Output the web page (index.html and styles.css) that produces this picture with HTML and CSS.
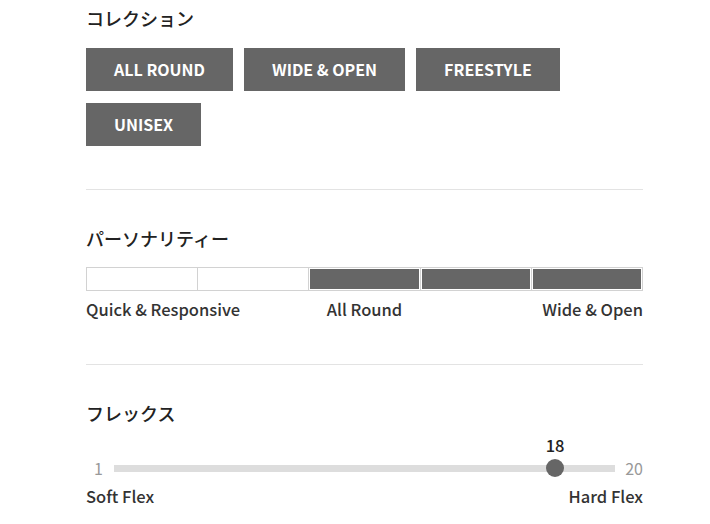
FILE: index.html
```html
<!DOCTYPE html>
<html lang="ja">
<head>
    <meta charset="UTF-8">
    <meta name="viewport" content="width=device-width, initial-scale=1.0">
    <title>Board Spec</title>
    <link rel="stylesheet" href="styles.css">
</head>
<body>
<div class="spec">

    <!-- Collection -->
    <div class="section section-first">
        <h2>コレクション</h2>
        <div class="tags">
            <a href="#" class="tag">ALL ROUND</a>
            <a href="#" class="tag">WIDE &amp; OPEN</a>
            <a href="#" class="tag">FREESTYLE</a>
            <a href="#" class="tag">UNISEX</a>
        </div>
    </div>

    <!-- Personality -->
    <div class="section">
        <h2>パーソナリティー</h2>
        <div class="meter">
            <span class="cell"></span>
            <span class="cell"></span>
            <span class="cell on"></span>
            <span class="cell on"></span>
            <span class="cell on"></span>
        </div>
        <div class="meter-labels">
            <span>Quick &amp; Responsive</span>
            <span class="mid">All Round</span>
            <span class="end">Wide &amp; Open</span>
        </div>
    </div>

    <!-- Flex -->
    <div class="section section-last">
        <h2>フレックス</h2>
        <div class="slider">
            <span class="scale-min">1</span>
            <div class="track">
                <div class="knob" style="left: calc((100% - 18px) * 0.8947);">
                    <span class="knob-value">18</span>
                </div>
            </div>
            <span class="scale-max">20</span>
        </div>
        <div class="slider-labels">
            <span>Soft Flex</span>
            <span>Hard Flex</span>
        </div>
    </div>

</div>
</body>
</html>
```

FILE: styles.css
```css
body {
    margin: 0;
    padding: 0;
    font-family: "Noto Sans CJK JP", "Noto Sans", sans-serif;
    background-color: #fff;
    color: #222;
}

.spec {
    width: 557px;
    margin-left: 86px;
}

.section {
    padding: 36px 0 44px;
    border-bottom: 1px solid #e3e3e3;
}

.section-first {
    padding-top: 6px;
    padding-bottom: 43px;
}

.section-last {
    border-bottom: none;
}

h2 {
    margin: 0;
    font-size: 18px;
    line-height: 24px;
    font-weight: 500;
    color: #222;
}

/* collection tags */
.tags {
    display: flex;
    flex-wrap: wrap;
    gap: 12px 11px;
    margin-top: 18px;
}

.tag {
    display: inline-block;
    height: 43px;
    line-height: 42px;
    padding: 0 28px;
    background-color: #666;
    color: #fff;
    font-size: 16px;
    font-weight: 700;
    text-decoration: none;
}

/* personality meter */
.meter {
    display: flex;
    margin-top: 17px;
    height: 24px;
}

.cell {
    flex: 1;
    border: 1px solid #d2d2d2;
    background-color: #fff;
}

.cell + .cell {
    margin-left: -1px;
}

.cell.on {
    background-color: #666;
    box-shadow: inset 0 0 0 1px #fff;
}

.meter-labels {
    display: grid;
    grid-template-columns: 1fr 1fr 1fr;
    margin-top: 7px;
    font-size: 16.5px;
    line-height: 22px;
    font-weight: 500;
    color: #333;
}

.meter-labels .mid {
    text-align: center;
}

.meter-labels .end {
    text-align: right;
}

/* flex slider */
.slider {
    display: grid;
    grid-template-columns: 28px 1fr 28px;
    align-items: center;
    margin-top: 29px;
    height: 28px;
    font-size: 16px;
    color: #999;
}

.scale-min {
    text-align: center;
    padding-right: 3px;
}

.scale-max {
    text-align: right;
}

.track {
    position: relative;
    height: 7px;
    background-color: #ddd;
}

.knob {
    position: absolute;
    top: -6px;
    width: 18px;
    height: 18px;
    border-radius: 50%;
    background-color: #666;
}

.knob-value {
    position: absolute;
    bottom: 22px;
    left: 50%;
    transform: translateX(-50%);
    font-size: 16.5px;
    font-weight: 500;
    line-height: 20px;
    color: #222;
}

.slider-labels {
    display: flex;
    justify-content: space-between;
    margin-top: 3px;
    font-size: 16.5px;
    line-height: 22px;
    font-weight: 500;
    color: #333;
}
```
